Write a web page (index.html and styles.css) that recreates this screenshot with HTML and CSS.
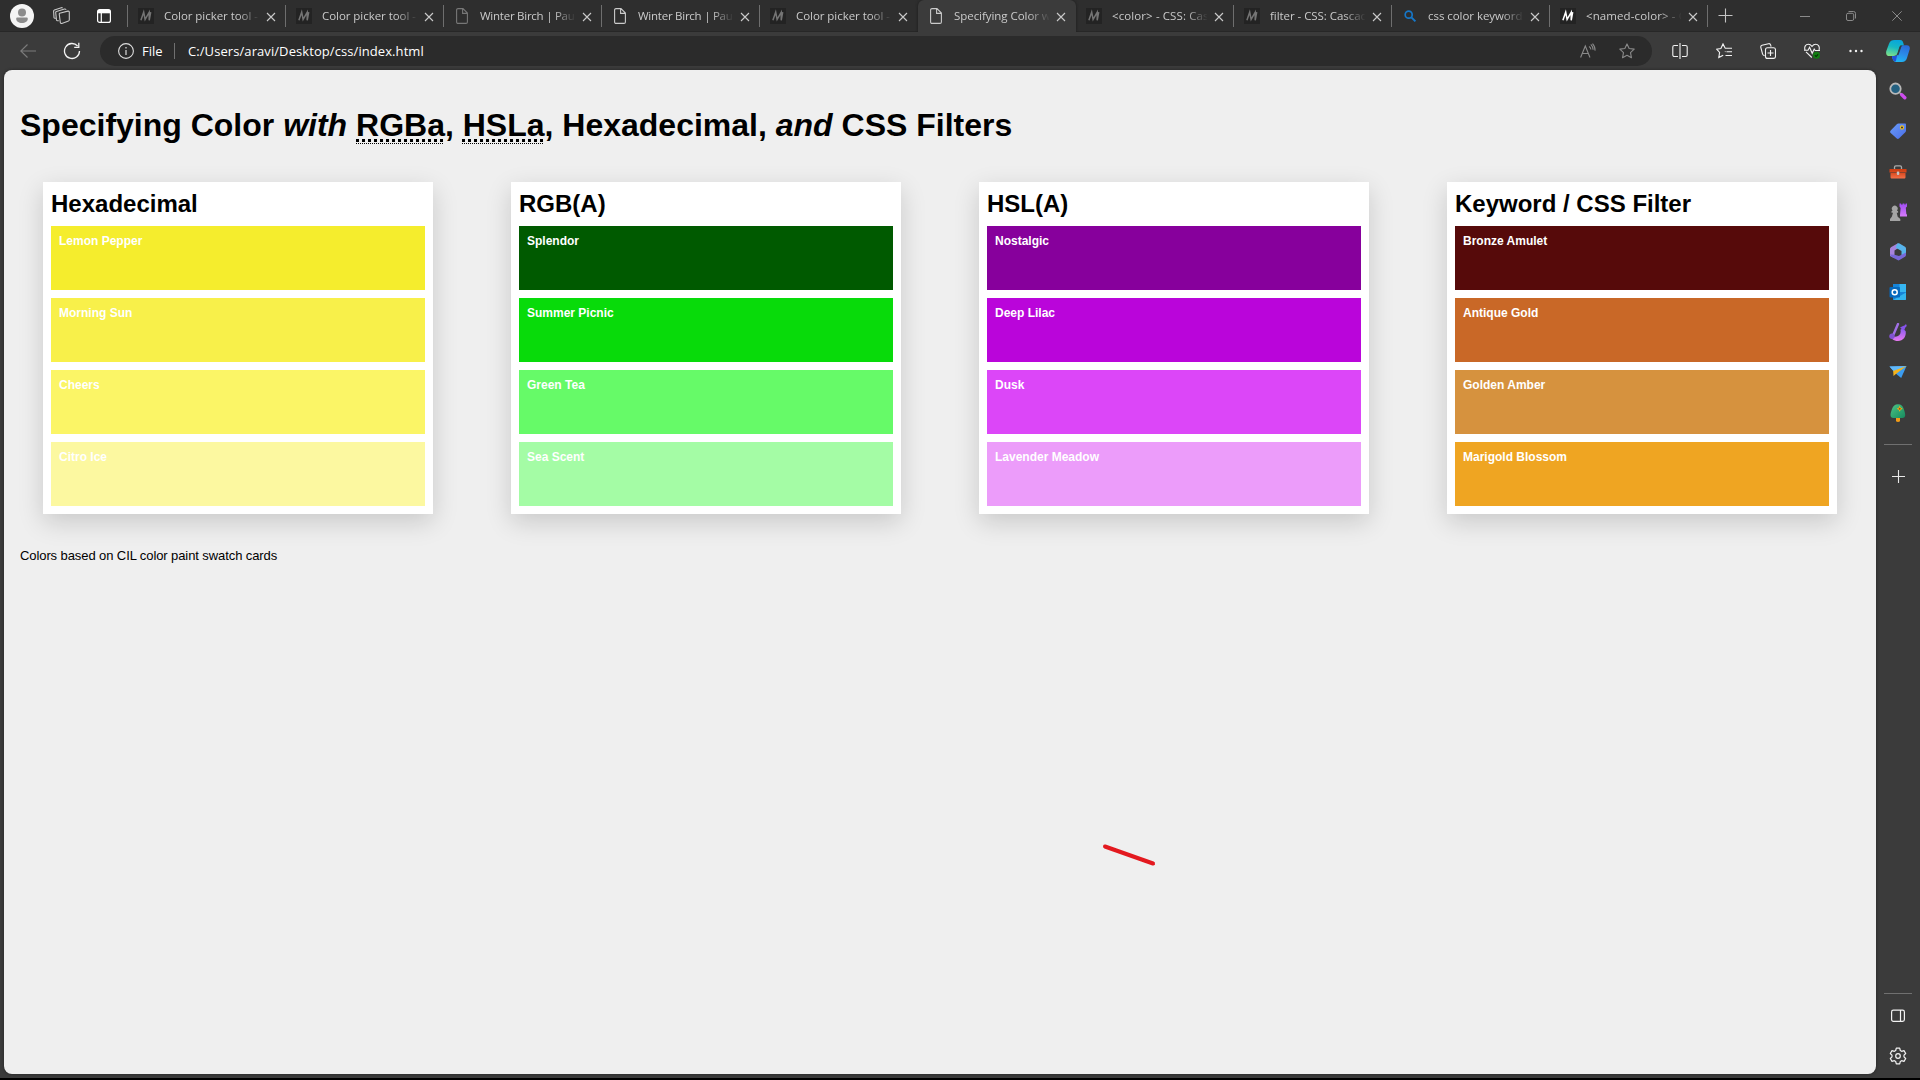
FILE: index.html
```html
<!DOCTYPE html>
<html lang="en">
<head>
<meta charset="utf-8">
<title>Specifying Color with RGBa, HSLa, Hexadecimal, and CSS Filters</title>
<link rel="stylesheet" href="styles.css">
</head>
<body>
<svg class="defs" aria-hidden="true">
  <defs>
    <linearGradient id="g-blue" x1="0" y1="0" x2="1" y2="1"><stop offset="0" stop-color="#6a9cf8"/><stop offset="1" stop-color="#4a6de8"/></linearGradient>
    <linearGradient id="g-cop1" x1="0.6" y1="0" x2="0.3" y2="1"><stop offset="0" stop-color="#08a5dc"/><stop offset=".45" stop-color="#16b8c4"/><stop offset="1" stop-color="#7be08a"/></linearGradient>
    <linearGradient id="g-cop2" x1="0.6" y1="0" x2="0.3" y2="1"><stop offset="0" stop-color="#2a6cdc"/><stop offset=".5" stop-color="#2b8ce8"/><stop offset="1" stop-color="#1fb8f4"/></linearGradient>
    <linearGradient id="g-purple" x1="0" y1="0" x2="0" y2="1"><stop offset="0" stop-color="#8a5cf0"/><stop offset="1" stop-color="#e879f0"/></linearGradient>
    <linearGradient id="g-rook" x1="0" y1="0" x2="0" y2="1"><stop offset="0" stop-color="#a04cf4"/><stop offset="1" stop-color="#d67cfa"/></linearGradient>
    <linearGradient id="g-red" x1="0" y1="0" x2="0" y2="1"><stop offset="0" stop-color="#cc3c10"/><stop offset=".4" stop-color="#d84a20"/><stop offset="1" stop-color="#f47048"/></linearGradient>
    <linearGradient id="g-tree" x1="0" y1="0" x2="1" y2="1"><stop offset="0" stop-color="#4cc486"/><stop offset="1" stop-color="#178a5e"/></linearGradient>
    <symbol id="i-close" viewBox="0 0 10 10"><path d="M1 1l8 8M9 1L1 9" fill="none" stroke="currentColor" stroke-width="1.1"/></symbol>
    <symbol id="i-file" viewBox="0 0 12 16"><path d="M2 .6h5L11.4 5v9c0 .8-.6 1.4-1.4 1.4H2C1.200 15.400.6 14.800.6 14V2C.6 1.200 1.200.6 2 .6zM6.600.8V5.400h4.600" fill="none" stroke="currentColor" stroke-width="1.100"/></symbol>
    <symbol id="i-mdn" viewBox="0 0 16 16"><path class="mdn-bg" d="M0 0h16v16H0z"/><path d="M2.900 12.300L5.700 4.200L7.100 11.300L11.200 4.300L11.200 12.300L12.700 4.200" fill="none" stroke="currentColor" stroke-width="1.500"/></symbol>
    <symbol id="i-star" viewBox="0 0 16 16"><path d="M8 .9l2.150 4.600 5.050.65-3.700 3.500.95 5L8 12.200l-4.450 2.450.95-5-3.700-3.500 5.050-.65z" fill="none" stroke="currentColor" stroke-linejoin="round" stroke-width="1.100"/></symbol>
  </defs>
</svg>
<div class="browser">
  <header class="tabstrip">
    <div class="strip-tools">
      <svg class="avatar" viewBox="0 0 24 24"><circle cx="12" cy="12" r="12" fill="#f4f4f4"/><circle cx="12" cy="8.500" r="4" fill="#8c8c8c"/><path d="M6.200 14.800c0-.8.500-1.300 1.300-1.300h9c.8 0 1.300.5 1.300 1.300 0 2.500-2.400 4.200-5.800 4.200s-5.800-1.700-5.800-4.200z" fill="#8c8c8c"/></svg>
      <svg class="workspaces" viewBox="0 0 18 18" fill="none" stroke="#c8c8c8" stroke-width="1.100" stroke-linejoin="round"><path d="M6.600 6.300l8.300-2.200c.6-.1 1.200.2 1.400.8v7.900c0 .6-.3 1-.8 1.200l-6.700 2.400c-.7.2-1.400-.2-1.500-.9l-1-8c-.1-.6 0-1 .3-1.200zM5.800 13.700l-1.200.1c-.6 0-1-.3-1.100-.8l-.8-7.300c-.1-.6.2-1 .7-1.200L11.600 2c.7-.2 1.300.2 1.400.8M2.800 11.200l-.9.100c-.5 0-.8-.3-.9-.7L.6 4.100c0-.6.300-1 .8-1.200L8.300.7c.6-.1 1 .1 1.200.6"/></svg>
      <svg class="tabactions" viewBox="0 0 14 14"><rect x=".6" y=".6" width="12.800" height="12.800" rx="2" fill="none" stroke="#fff" stroke-width="1.200"/><path d="M1 1h12v3.300H1z" fill="#fff"/><path d="M4.300 4v9" stroke="#fff" stroke-width="1.200"/></svg>
    </div>
    <nav class="tabs">
      <div class="tab"><svg class="fav mdn"><use href="#i-mdn"/></svg><span class="label">Color picker tool - CSS</span><svg class="x"><use href="#i-close"/></svg></div>
      <div class="tab"><svg class="fav mdn"><use href="#i-mdn"/></svg><span class="label">Color picker tool - CSS</span><svg class="x"><use href="#i-close"/></svg></div>
      <div class="tab"><svg class="fav file dim"><use href="#i-file"/></svg><span class="label tight">Winter Birch | Paula</span><svg class="x"><use href="#i-close"/></svg></div>
      <div class="tab"><svg class="fav file"><use href="#i-file"/></svg><span class="label tight">Winter Birch | Paula</span><svg class="x"><use href="#i-close"/></svg></div>
      <div class="tab"><svg class="fav mdn"><use href="#i-mdn"/></svg><span class="label">Color picker tool - CSS</span><svg class="x"><use href="#i-close"/></svg></div>
      <div class="tab active"><svg class="fav file"><use href="#i-file"/></svg><span class="label">Specifying Color with</span><svg class="x"><use href="#i-close"/></svg></div>
      <div class="tab"><svg class="fav mdn"><use href="#i-mdn"/></svg><span class="label wide">&lt;color&gt; - CSS: Cascading</span><svg class="x"><use href="#i-close"/></svg></div>
      <div class="tab"><svg class="fav mdn"><use href="#i-mdn"/></svg><span class="label">filter - CSS: Cascading</span><svg class="x"><use href="#i-close"/></svg></div>
      <div class="tab"><svg class="fav search" viewBox="0 0 16 16" fill="none" stroke="#1677c8" stroke-width="1.700"><circle cx="6.700" cy="6.700" r="3.500"/><path d="M9.400 9.400l4 4" stroke-width="2"/></svg><span class="label">css color keywords</span><svg class="x"><use href="#i-close"/></svg></div>
      <div class="tab"><svg class="fav mdn bright"><use href="#i-mdn"/></svg><span class="label wide">&lt;named-color&gt; - CSS</span><svg class="x"><use href="#i-close"/></svg></div>
    </nav>
    <svg class="newtab" viewBox="0 0 15 15"><path d="M7.500.5v14M.5 7.500h14" stroke="#c4c4c4" stroke-width="1.100"/></svg>
    <div class="winctl">
      <svg viewBox="0 0 10 10"><path d="M0 5.500h10"/></svg>
      <svg viewBox="0 0 10 10"><rect x=".5" y="2.300" width="7.200" height="7.200" rx="1.500"/><path d="M2.500.5h5A2 2 0 0 1 9.500 2.500v5"/></svg>
      <svg viewBox="0 0 10 10"><path d="M.3.3l9.400 9.400M9.700.3L.3 9.700"/></svg>
    </div>
  </header>
  <div class="toolbar">
    <svg class="back" viewBox="0 0 16 16" fill="none" stroke="#7c7c7c" stroke-width="1.100"><path d="M16 8H1M7.500 1.500L.8 8l6.700 6.500"/></svg>
    <svg class="reload" viewBox="0 0 18 18" fill="none" stroke="#f2f2f2" stroke-width="1.300"><path d="M16.500 9A7.500 7.500 0 1 1 14.600 4M15.800.8v4.500h-4.600"/></svg>
    <div class="address">
      <svg class="info" viewBox="0 0 16 16"><circle cx="8" cy="8" r="7.400" fill="none" stroke="#ddd" stroke-width="1.100"/><path d="M8 7v5M8 4v1.400" stroke="#ddd" stroke-width="1.200"/></svg>
      <span class="scheme">File</span>
      <span class="url">C:/Users/aravi/Desktop/css/index.html</span>
      <svg class="read" viewBox="0 0 16 16" fill="none" stroke="#8a8a8a" stroke-width="1.100"><path d="M.6 14.500L5.300 3l4.700 11.500M2.200 10.500h6.200M9 3.400c1.200.7 1.800 1.700 1.900 3.100M10.800 1.300c1.500 1.500 2.300 3.300 2.300 5.400M12.500.6c1.900 2 2.700 4.300 2.500 7"/></svg>
      <svg class="fave"><use href="#i-star"/></svg>
    </div>
    <div class="actions">
      <svg viewBox="0 0 16 16"><path d="M6 2.500H2.300A1.500 1.500 0 0 0 .8 4v8a1.500 1.500 0 0 0 1.500 1.500H6M10 2.500h3.700A1.500 1.500 0 0 1 15.200 4v8a1.500 1.500 0 0 1-1.500 1.500H10M8 0v16"/></svg>
      <svg viewBox="0 0 16 16"><path d="M9 5.200h7M10.500 8.800H16M9.500 12.500H16M9.200 5.200L7 .9 4.900 5.500.6 6.100l3 3.300-.8 5.200L7.200 12.300M9 8.800l.4-.4"/></svg>
      <svg viewBox="0 0 16 16"><path d="M4.600 12.600c-1 0-1.700-.5-2-1.400L.8 4.300C.6 3.300 1 2.500 2 2.200L8.500.7c1-.2 1.800.2 2.100 1.200l.5 1.800M10.500 7v6M7.500 10h6"/><rect x="5.500" y="4.800" width="10" height="10.600" rx="2"/></svg>
      <svg viewBox="0 0 16 16"><path d="M7.800 14.500L2 8.800M1 7C0 3.500 1.700 1.300 4.300 1.300c1.500 0 2.700.7 3.700 2 1-1.300 2.200-2 3.700-2C14.300 1.300 16 3.500 15 7M0 7.300h4l1.600-3 2.600 6 2-4.300 1 1.500H16"/><circle cx="12.500" cy="12.300" r="3.500" fill="#107c10" stroke="none"/><path d="M10.900 12.300l1.200 1.200 2-2.200" stroke="#062c06"/></svg>
      <svg viewBox="0 0 16 16"><g fill="#f2f2f2" stroke="none"><circle cx="2.500" cy="8" r="1.200"/><circle cx="8" cy="8" r="1.200"/><circle cx="13.500" cy="8" r="1.200"/></g></svg>
    </div>
    <svg class="copilot" viewBox="0 0 24 22"><path d="M6 16h3.500c1.500 0 2.300-1 2.900-2.500L15 7c.5-1.300 1.200-1.800 2.500-1.800h3.300C23.300 5.200 24.300 7 23.600 9.500L21 18c-.8 2.800-2.500 4-5 4h-5.500C7.500 22 6.500 19.500 6 16z" fill="url(#g-cop2)"/><path d="M6 16h3c1 0 1.800-.4 2.300-1.200L9.800 21.500C7.500 21.500 6.500 19 6 16z" fill="#2350d8"/><path d="M8.500 0H14c2.500 0 3.200 1.800 3.900 5.300h-1.700c-1.700 0-2.500.7-3 2.300L11.500 13c-.7 2.200-2 3-4 3h-4C.7 16-.4 14 .3 11L3 3.800C4 1 5.800 0 8.500 0z" fill="url(#g-cop1)"/><path d="M15 5.700L11.800 15" stroke="#30404a" stroke-width="1.300"/></svg>
  </div>
  <div class="body">
    <main class="page">
      <h1>Specifying Color <em>with</em> <abbr><span>RGBa</span></abbr>, <abbr><span>HSLa</span></abbr>, Hexadecimal, <em>and</em> CSS Filters</h1>
      <div class="cards">
        <section class="card"><h2>Hexadecimal</h2><div class="swatch lemon">Lemon Pepper</div><div class="swatch morning">Morning Sun</div><div class="swatch cheers">Cheers</div><div class="swatch citro">Citro Ice</div></section>
        <section class="card"><h2>RGB(A)</h2><div class="swatch splendor">Splendor</div><div class="swatch picnic">Summer Picnic</div><div class="swatch tea">Green Tea</div><div class="swatch sea">Sea Scent</div></section>
        <section class="card"><h2>HSL(A)</h2><div class="swatch nostalgic">Nostalgic</div><div class="swatch lilac">Deep Lilac</div><div class="swatch dusk">Dusk</div><div class="swatch lavender">Lavender Meadow</div></section>
        <section class="card"><h2>Keyword / CSS Filter</h2><div class="swatch bronze">Bronze Amulet</div><div class="swatch antique">Antique Gold</div><div class="swatch amber">Golden Amber</div><div class="swatch marigold">Marigold Blossom</div></section>
      </div>
      <p class="credit">Colors based on CIL color paint swatch cards</p>
      <svg class="mark" viewBox="0 0 56 24"><path d="M3 3.500l48 17" stroke="#e3191f" stroke-width="4" stroke-linecap="round"/></svg>
    </main>
    <aside class="sidebar">
      <div class="apps">
        <svg viewBox="0 0 18 18"><path d="M11 11l2 2" stroke="#aaa" stroke-width="2"/><path d="M12.800 12.800l3 3" stroke="#cf4cf0" stroke-width="3.400" stroke-linecap="round"/><circle cx="6.500" cy="6.700" r="5.200" fill="#246080" stroke="#b8b8b8" stroke-width="1.800"/></svg>
        <svg viewBox="0 0 18 18"><path d="M9.500 1.500h6.300c.8 0 1.200.4 1.200 1.200V8.500c0 .7-.2 1.200-.7 1.700l-6.100 6.100c-.9.900-1.800.9-2.700 0L1.700 11c-.8-.8-.8-1.700 0-2.600L7.800 2.200c.5-.5 1-.7 1.700-.7z" fill="url(#g-blue)"/><circle cx="13" cy="5.500" r="1.600" fill="#334" stroke="#f2c21c" stroke-width="1.100"/></svg>
        <svg viewBox="0 0 18 18"><g transform="translate(0 1)"><path d="M5.500 6V4.200c0-.9.500-1.400 1.400-1.400h4.200c.9 0 1.400.5 1.400 1.400V6" fill="none" stroke="#aaa" stroke-width="1.300"/><path d="M.5 6h17v3.500h-17zM1.500 10h15v4c0 1-.5 1.500-1.500 1.500H3c-1 0-1.500-.5-1.500-1.500z" fill="url(#g-red)"/><rect x="7.800" y="8.500" width="2.500" height="3.500" rx="1" fill="#c4c4c4"/></g></svg>
        <svg viewBox="0 0 18 18"><path d="M10.500.5h1.600v1h1.500v-1h1.800v1h1.200v-1h1.400v3l-1.200 1.200.5 6 .7 1v1.800h-7v-1.500l.6-7L10.500 3.500z" fill="url(#g-rook)"/><path d="M1 18v-2l1.800-2.300L4 9.800H2.500V8.200L3.600 7.500a2.900 2.900 0 1 1 4.300 0l1.200.7v1.600H7.700l1 3.900 2.600 2.300v2z" fill="#a4a4a4"/></svg>
        <svg viewBox="0 0 18 18"><path d="M8.500.5L2.300 4C1.500 4.500 1 5.200 1 6v7l4.500 2.200V7.500l4.500-3L12 2z" fill="#a783dc"/><path d="M8.500.5c.7-.3 1.300-.3 2 0L16 3.800c.7.500 1 1 1 2V11l-4.500 2V8L6.500 4.500z" fill="#58b4ec"/><path d="M17 9.500v2.300c0 .9-.3 1.500-1 2l-5.500 3.300c-.7.400-1.300.4-2 0L2 13.500l-1-2 4.500.3 4.500 1.200z" fill="#7868d8"/></svg>
        <svg viewBox="0 0 18 18"><path d="M4 1h12c.6 0 1 .4 1 1v14c0 .6-.4 1-1 1H4z" fill="#1684d8"/><path d="M10.500 1H17v8h-6.500z" fill="#36b6f2"/><path d="M4 17l13-7.500V16c0 .6-.4 1-1 1z" fill="#32b4ef"/><rect x=".5" y="4" width="10.500" height="10.500" rx="1" fill="#0669bd"/><circle cx="5.700" cy="9.200" r="2.500" fill="none" stroke="#fff" stroke-width="1.500"/></svg>
        <svg viewBox="0 0 18 18"><path d="M1.500 12c2 2 5 2.200 7.500 1 2-1 3.200-3 2.500-6.500L14 5.500l2.700 2.700C17.500 13.500 14 18 9 18c-4.500 0-7.500-2.500-7.500-6z" fill="url(#g-purple)"/><path d="M9 1L4.500 11.500" stroke="#a070e4" stroke-width="2.400" stroke-linecap="round"/><circle cx="3" cy="13.300" r="2.700" fill="#8252d0"/><path d="M14 3l1.500-.5L17 1l.8 2-1.500 1.500-1 2.500-2-.5-2.300-2z" fill="#8754ec"/></svg>
        <svg viewBox="0 0 18 18"><path d="M.5 3.500L17.500 3l-5.300 12-4-3.200z" fill="#3b9cf0"/><path d="M.5 3.500L17.500 3 4.800 8.500z" fill="#61b8f8"/><path d="M4.200 8L17.500 3 7.500 10.500 4.500 13z" fill="#f4b31c"/></svg>
        <svg viewBox="0 0 18 18"><path d="M7 13h4v4.300c-1.300.8-2.700.8-4 0z" fill="#f29b17"/><path d="M9 .3c3 0 5 2 5.800 4.800.8 2.300 1.400 4.200 1.400 6 0 2-1 2.900-3 2.900H4.500c-2 0-3-.9-3-2.900 0-1.800.7-3.700 1.500-6C4 2.300 6 .3 9 .3z" fill="url(#g-tree)"/><path d="M10.700 1.800l1 1.900 2 1-2 1-1 2-1-2-2-1 2-1z" fill="#f5b318"/><circle cx="10.700" cy="4.700" r="1" fill="#a04a08"/></svg>
      </div>
      <div class="rule"></div>
      <svg class="add" viewBox="0 0 13 13"><path d="M6.500 0v13M0 6.500h13" stroke="#e8e8e8" stroke-width="1.100"/></svg>
      <div class="bottom">
        <div class="rule"></div>
        <svg class="panel" viewBox="0 0 14 14"><rect x=".6" y="1.100" width="12.800" height="11.300" rx="1.800"/><path d="M9.500 1v11.500"/></svg>
        <svg class="gear" viewBox="0 0 18 18"><path d="M7.300 1.100h3.400l.6 2.400 1.300.8 2.400-.7 1.700 2.900L15 8.200v1.600l1.700 1.700-1.700 2.900-2.400-.7-1.300.8-.6 2.400H7.300l-.6-2.400-1.300-.8-2.400.7-1.700-2.900L3 9.800V8.200L1.300 6.500 3 3.600l2.400.7 1.300-.8z" stroke-linejoin="round"/><circle cx="9" cy="9" r="2.300"/></svg>
      </div>
    </aside>
  </div>
</div>
</body>
</html>
```
FILE: styles.css
```css
* { box-sizing: border-box; }

body {
  margin: 0;
  background: #000;
  overflow: hidden;
}

svg { display: block; flex: none; }
.defs { position: absolute; width: 0; height: 0; }

.browser {
  display: flex;
  flex-direction: column;
  width: 1920px;
  height: 1078px;
  background: #3b3b3b;
  font-family: "Open Sans", "Noto Sans", sans-serif;
}

/* Tab strip */
.tabstrip {
  display: flex;
  height: 32px;
  background: #2e2e2e;
  box-shadow: inset 0 -1px #272727;
}

.strip-tools {
  display: flex;
  align-items: center;
  width: 127px;
  padding-left: 10px;
}
.avatar { width: 24px; height: 24px; }
.workspaces { width: 18px; height: 18px; margin-left: 19px; }
.tabactions { width: 14px; height: 14px; margin-left: 26px; }

.tabs { display: flex; }
.tab {
  display: flex;
  align-items: center;
  width: 158px;
  padding: 0 10px;
  border-right: 1px solid transparent;
  border-image: linear-gradient(transparent 6px, #6e6e6e 6px 26px, transparent 26px) 1;
  color: #cacaca;
}
.tab:first-child {
  width: 159px;
  border-left: 1px solid transparent;
}
.tab:nth-child(5) { border-image: none; }
.tab.active {
  background: #3b3b3b;
  border-image: none;
  border-right: 0;
  border-radius: 6px 6px 0 0;
  box-shadow: 0 0 3px #1c1c1c;
  clip-path: inset(0 -4px 0 -4px);
}
.fav { width: 16px; height: 16px; margin-right: 10px; }
.fav.file { width: 12px; margin: 0 12px 0 2px; }
.fav.file.dim { color: #777; }
.fav.mdn { color: #747474; }
.mdn-bg { fill: #232323; }
.fav.mdn.bright { background: #14141a; color: #fff; }
.bright .mdn-bg { fill: #14141a; }
.label {
  flex: none;
  width: 95px;
  overflow: hidden;
  white-space: nowrap;
  font-size: 11.5px;
  line-height: 16px;
  letter-spacing: -0.05px;
  -webkit-mask-image: linear-gradient(90deg, #000 74px, transparent 96px);
  mask-image: linear-gradient(90deg, #000 74px, transparent 96px);
}
.label.tight { letter-spacing: -0.25px; }
.label.wide { letter-spacing: 0.1px; }
.x { width: 10px; height: 10px; margin: 1px 0 0 7px; }

.newtab { width: 15px; height: 15px; margin: 8px 0 0 10px; }
.winctl {
  display: flex;
  gap: 36px;
  margin: 11px 18px 0 auto;
}
.winctl svg {
  width: 10px;
  height: 10px;
  fill: none;
  stroke: #8a8a8a;
}

/* Toolbar */
.toolbar {
  display: flex;
  align-items: center;
  height: 38px;
  padding: 0 10px 0 20px;
}
.back { width: 16px; height: 16px; }
.reload { width: 18px; height: 18px; margin-left: 27px; }
.address {
  display: flex;
  align-items: center;
  width: 1552px;
  height: 30px;
  margin-left: 19px;
  padding: 0 17px 0 18px;
  border-radius: 15px;
  background: #2b2b2b;
  color: #fff;
  font-size: 13px;
}
.info { width: 16px; height: 16px; }
.scheme {
  width: 33px;
  height: 16px;
  margin-left: 8px;
  line-height: 16px;
  border-right: 1px solid #707070;
}
.url { margin-left: 13px; letter-spacing: 0.08px; }
.read { width: 16px; height: 16px; margin-left: auto; }
.fave { width: 16px; height: 16px; margin-left: 23px; color: #8a8a8a; }
.actions {
  display: flex;
  gap: 28px;
  margin-left: 20px;
}
.actions svg {
  width: 16px;
  height: 16px;
  fill: none;
  stroke: #f2f2f2;
  stroke-width: 1.1;
}
.copilot { width: 24px; height: 22px; margin-left: auto; }

/* Viewport */
.body { display: flex; flex: 1; }
.page {
  position: relative;
  width: 1872px;
  height: 1004px;
  margin-left: 4px;
  padding-top: 34px;
  border-radius: 8px;
  background: #efefef;
  box-shadow: 0 0 3px #222;
  color: #000;
  font-family: "Liberation Sans", Arial, sans-serif;
}
h1 {
  margin: 0 16px;
  font-size: 32px;
  line-height: 42px;
}
abbr { text-decoration: underline dotted 1px; text-underline-offset: 7px; }
abbr span { text-decoration: underline dotted 3px; text-underline-offset: 3px; }
.cards {
  display: flex;
  justify-content: space-around;
  margin-top: 36px;
}
.card {
  display: grid;
  gap: 8px;
  width: 390px;
  padding: 8px;
  background: #fff;
  box-shadow: 0 8px 24px rgb(0 0 0 / 0.16);
}
h2 {
  margin: 0;
  font-size: 24px;
  line-height: 28px;
}
.swatch {
  height: 64px;
  padding: 8px;
  color: #fff;
  font-size: 12px;
  font-weight: bold;
  line-height: 14px;
}
.lemon { background: #f5ed2d; }
.morning { background: #f8f04a; }
.cheers { background: #fbf566; }
.citro { background: #fcf8a0; }
.splendor { background: rgb(0 90 0); }
.picnic { background: rgb(8 219 10); }
.tea { background: rgb(102 250 104); }
.sea { background: rgb(164 252 165); }
.nostalgic { background: #87009c; }
.lilac { background: #ba05da; }
.dusk { background: #dc46f8; }
.lavender { background: #ec9cfa; }
.bronze { background: #560a0a; }
.antique { background: #c96827; }
.amber { background: #d6923e; }
.marigold { background: #efa522; }
.credit {
  margin: 34px 16px 0;
  font-size: 13px;
  line-height: 16px;
  letter-spacing: -0.09px;
}
.mark {
  position: absolute;
  left: 1098px;
  top: 772.5px;
  width: 56px;
  height: 24px;
}

/* Sidebar */
.sidebar {
  display: flex;
  flex-direction: column;
  align-items: center;
  width: 44px;
  padding-top: 12px;
}
.apps { display: grid; gap: 22.2px; }
.apps svg { width: 18px; height: 18px; }
.rule { width: 28px; height: 1px; background: #707070; }
.apps + .rule { margin-top: 22px; }
.add { width: 13px; height: 13px; margin-top: 25px; }
.bottom {
  display: flex;
  flex-direction: column;
  align-items: center;
  margin-top: auto;
  padding-bottom: 13px;
}
.bottom svg { fill: none; stroke: #f2f2f2; stroke-width: 1.2; }
.panel { width: 14px; height: 14px; margin-top: 15px; }
.gear { width: 18px; height: 18px; margin-top: 24px; }
```
